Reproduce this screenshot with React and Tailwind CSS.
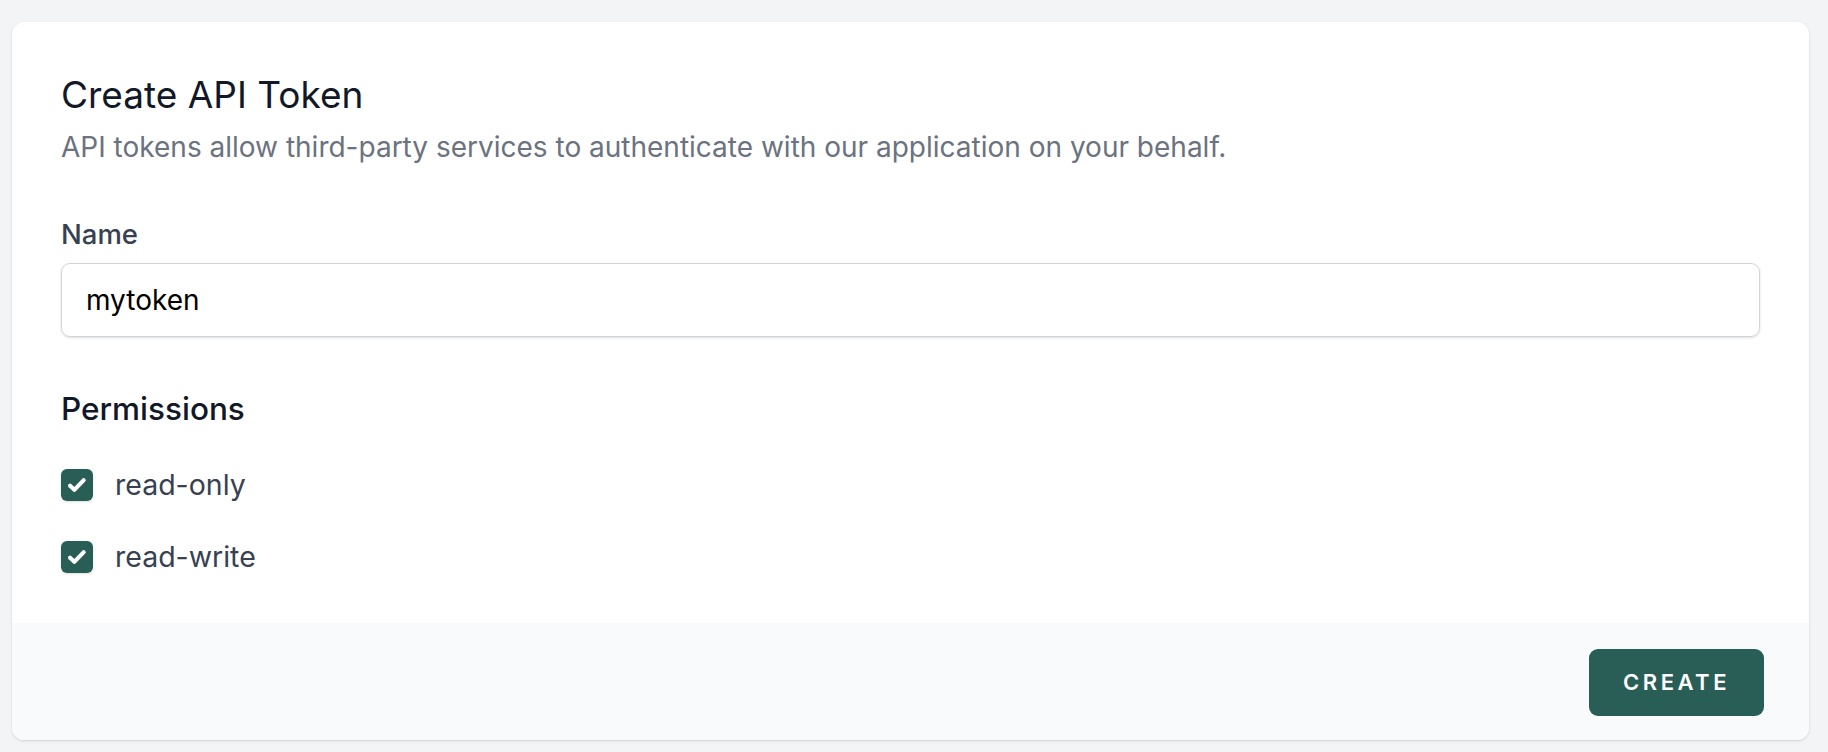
import React, { useState } from 'react';

const CheckIcon = () => (
  <svg className="w-[24px] h-[24px]" viewBox="0 0 20 20" fill="none">
    <path d="M4.2 10.6l3.6 3.4 7.8-8" stroke="white" strokeWidth="3.4" strokeLinecap="round" strokeLinejoin="round" />
  </svg>
);

const Permission = ({ label, checked, onToggle }) => (
  <label className="flex items-center h-[42px] cursor-pointer">
    <button
      type="button"
      onClick={onToggle}
      className={`w-[32px] h-[32px] rounded-[6px] flex items-center justify-center shadow-sm ${checked ? 'bg-[#285e55]' : 'bg-white border border-gray-300'}`}
    >
      {checked && <CheckIcon />}
    </button>
    <span className="ml-[22px] text-[28.5px] text-[#374151]">{label}</span>
  </label>
);

export default function App() {
  const [name, setName] = useState('mytoken');
  const [perms, setPerms] = useState({ 'read-only': true, 'read-write': true });

  const toggle = (key) => setPerms({ ...perms, [key]: !perms[key] });

  return (
    <div className="min-h-screen bg-[#f3f4f6] pt-[22px] pl-[12px] pr-[19px] pb-[10px]" style={{ fontFamily: 'Inter, "Noto Sans", sans-serif' }}>
      <div className="bg-white rounded-[12px] shadow-[0_1px_3px_rgba(0,0,0,0.1),0_1px_2px_rgba(0,0,0,0.06)] overflow-hidden">
        {/* Form body */}
        <div className="px-[49px] pt-[49px] pb-[45px]">
          <h2 className="text-[37px] leading-[48px] font-normal text-[#111827]">Create API Token</h2>
          <p className="mt-[10px] text-[28px] leading-[36px] text-[#6b7280]">
            API tokens allow third-party services to authenticate with our application on your behalf.
          </p>

          <div className="mt-[51px]">
            <label className="block text-[27.5px] leading-[36px] font-medium text-[#374151]">Name</label>
            <input
              value={name}
              onChange={(e) => setName(e.target.value)}
              className="mt-[11px] w-full h-[74px] px-[24px] rounded-[9px] border-[1.5px] border-[#d1d5db] shadow-sm text-[28px] text-black outline-none"
            />
          </div>

          <h3 className="mt-[51px] text-[31.5px] leading-[42px] font-medium text-[#111827]">Permissions</h3>
          <div className="mt-[34px] flex flex-col gap-[30px]">
            {Object.keys(perms).map((key) => (
              <Permission key={key} label={key} checked={perms[key]} onToggle={() => toggle(key)} />
            ))}
          </div>
        </div>

        {/* Footer */}
        <div className="bg-[#f9fafb] px-[45px] pt-[26px] pb-[24px] flex justify-end">
          <button className="h-[67px] px-[34px] rounded-[9px] bg-[#285e55] text-white text-[22px] font-semibold tracking-[0.16em]">
            CREATE
          </button>
        </div>
      </div>
    </div>
  );
}
